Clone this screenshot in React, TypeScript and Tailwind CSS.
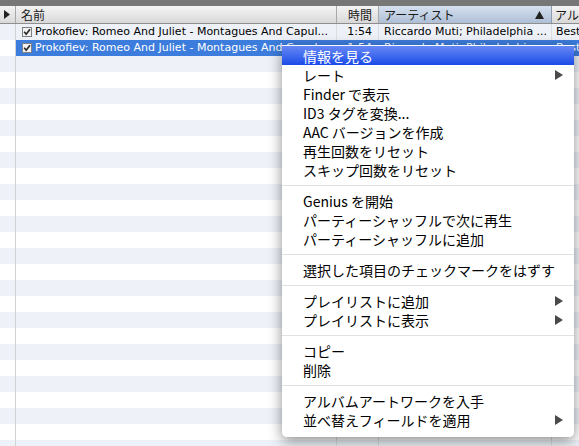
import React from 'react';

type Item = { t: string; hl?: boolean; arrow?: boolean } | 'sep';

const menu: Item[] = [
  { t: '情報を見る', hl: true },
  { t: 'レート', arrow: true },
  { t: 'Finder で表示' },
  { t: 'ID3 タグを変換...' },
  { t: 'AAC バージョンを作成' },
  { t: '再生回数をリセット' },
  { t: 'スキップ回数をリセット' },
  'sep',
  { t: 'Genius を開始' },
  { t: 'パーティーシャッフルで次に再生' },
  { t: 'パーティーシャッフルに追加' },
  'sep',
  { t: '選択した項目のチェックマークをはずす' },
  'sep',
  { t: 'プレイリストに追加', arrow: true },
  { t: 'プレイリストに表示', arrow: true },
  'sep',
  { t: 'コピー' },
  { t: '削除' },
  'sep',
  { t: 'アルバムアートワークを入手' },
  { t: '並べ替えフィールドを適用', arrow: true },
];

function Check() {
  return (
    <svg width="10" height="10" viewBox="0 0 10 10" className="shrink-0">
      <rect x="0.5" y="0.5" width="9" height="9" fill="#f2f2f2" stroke="#808080" />
      <path d="M2.2 4.8 L4.2 7.2 L8 2.2" fill="none" stroke="#2a2a2a" strokeWidth="1.7" />
    </svg>
  );
}

function Arrow() {
  return (
    <svg width="8" height="10" viewBox="0 0 8 10" className="shrink-0">
      <polygon points="0,0 8,5 0,10" fill="#4a4a4a" />
    </svg>
  );
}

function Row({ i }: { i: number }) {
  const stripe = i % 2 === 0;
  const sel = i === 1;
  const data = i < 2;
  const bg = stripe ? 'bg-[#eef2f8]' : 'bg-white';
  const line = sel ? 'border-[#3c7cdc]' : 'border-[#dedede]';
  return (
    <div className={`flex h-4 ${bg}`}>
      <div className="w-4 shrink-0 border-r border-[#d2d2d2]" />
      <div className={`flex flex-1 min-w-0 ${sel ? 'bg-[#3c7cdc] text-white' : 'text-black'}`}>
        <div className={`w-[321px] shrink-0 border-r ${line} flex items-center pl-[6px] gap-[3px] overflow-hidden whitespace-nowrap`}>
          {data && <Check />}
          {data && <span>Prokofiev: Romeo And Juliet - Montagues And Capul...</span>}
        </div>
        <div className={`w-[42px] shrink-0 border-r ${line} flex items-center justify-end pr-[6px]`}>
          {data && <span>1:54</span>}
        </div>
        <div className={`w-[173px] shrink-0 border-r ${line} flex items-center pl-[5px] whitespace-nowrap overflow-hidden`}>
          {data && <span>Riccardo Muti; Philadelphia ...</span>}
        </div>
        <div className="flex-1 flex items-center pl-[4px] whitespace-nowrap overflow-hidden">
          {data && <span>Best</span>}
        </div>
      </div>
    </div>
  );
}

export default function App() {
  return (
    <div className="relative w-[579px] h-[446px] overflow-hidden bg-white font-['Lucida_Grande','DejaVu_Sans','Noto_Sans_CJK_JP',sans-serif] text-[11px]">
      <div className="h-[6px] bg-[#777777]" />
      <div className="flex h-[18px] border-b border-[#8e8e8e] bg-gradient-to-b from-[#f4f4f4] to-[#d9d9d9] text-[12px] text-[#1a1a1a] font-['Noto_Sans_CJK_JP',sans-serif]">
        <div className="w-4 shrink-0 border-r border-[#a8a8a8] flex items-center pl-[4px]">
          <svg width="6" height="9" viewBox="0 0 6 9"><polygon points="0,0 6,4.5 0,9" fill="#222" /></svg>
        </div>
        <div className="w-[321px] shrink-0 border-r border-[#a8a8a8] flex items-center pl-[5px]">名前</div>
        <div className="w-[42px] shrink-0 border-r border-[#a8a8a8] flex items-center justify-end pr-[6px]">時間</div>
        <div className="w-[173px] shrink-0 border-r border-[#8c9bb0] flex items-center justify-between pl-[5px] pr-[7px] bg-gradient-to-b from-[#d6e1ef] to-[#aebfd6]">
          <span>アーティスト</span>
          <svg width="9" height="8" viewBox="0 0 9 8"><polygon points="4.5,0 9,8 0,8" fill="#222" /></svg>
        </div>
        <div className="flex-1 flex items-center pl-[3px] whitespace-nowrap overflow-hidden">アルバム</div>
      </div>
      <div className="flex flex-col">
        {Array.from({ length: 27 }).map((_, i) => (
          <Row key={i} i={i} />
        ))}
      </div>

      <div className="absolute left-[282px] top-[45px] w-[292px] pt-[1px] pb-[8px] bg-white/[0.97] rounded-b-[5px] shadow-[0_4px_14px_rgba(0,0,0,0.45)] font-['Noto_Sans_CJK_JP',sans-serif] text-[14px] text-black">
        {menu.map((m, idx) =>
          m === 'sep' ? (
            <div key={idx} className="h-[12px] flex items-center">
              <div className="h-px w-full bg-[#e2e2e2]" />
            </div>
          ) : (
            <div
              key={idx}
              className={`h-[19px] flex items-center justify-between pl-[21px] pr-[11px] leading-none whitespace-nowrap ${m.hl ? 'bg-gradient-to-b from-[#6686f4] to-[#1b4ae8] text-white' : ''}`}
            >
              <span>{m.t}</span>
              {m.arrow && <Arrow />}
            </div>
          )
        )}
      </div>
    </div>
  );
}
